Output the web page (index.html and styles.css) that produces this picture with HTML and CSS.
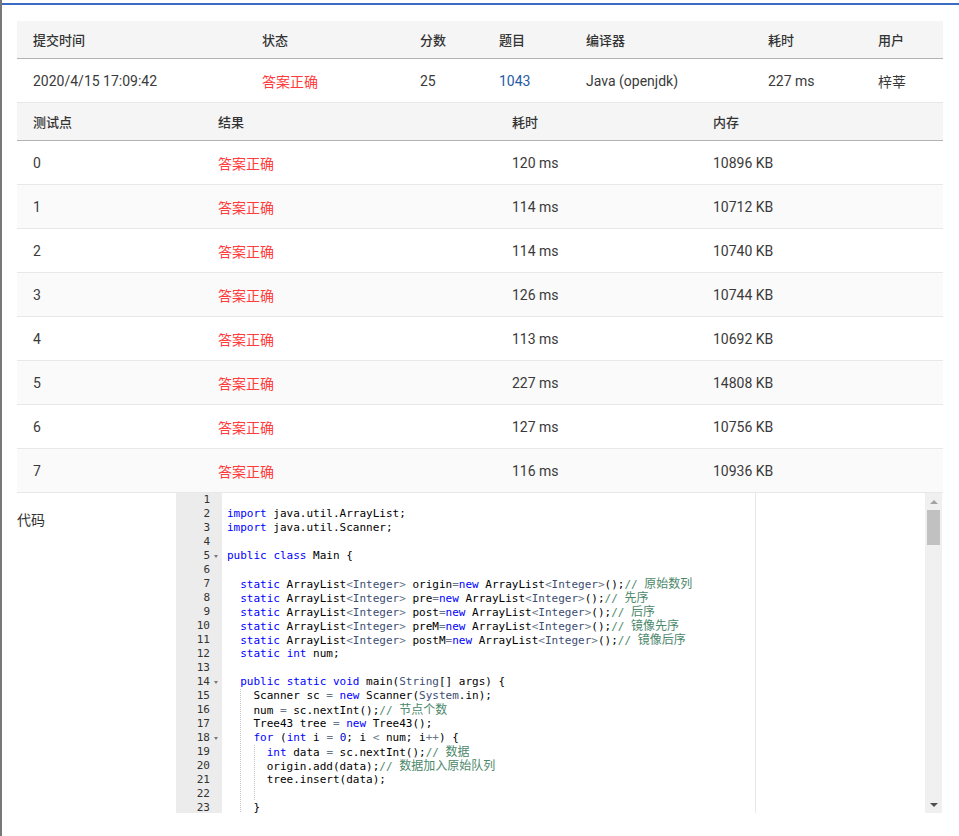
FILE: index.html
```html
<!DOCTYPE html>
<html lang="zh-CN">
<head>
<meta charset="utf-8">
<title>提交详情</title>
<link rel="stylesheet" href="styles.css">
</head>
<body>
<div class="frame">
  <div class="topbar"></div>
  <div class="content">
    <div class="row t1 head">
      <div class="cell">提交时间</div><div class="cell">状态</div><div class="cell">分数</div><div class="cell">题目</div><div class="cell">编译器</div><div class="cell">耗时</div><div class="cell">用户</div>
    </div>
    <div class="row t1 brow">
      <div class="cell">2020/4/15 17:09:42</div><div class="cell ok">答案正确</div><div class="cell">25</div><div class="cell link">1043</div><div class="cell">Java (openjdk)</div><div class="cell">227 ms</div><div class="cell">梓莘</div>
    </div>
    <div class="row t2 head">
      <div class="cell">测试点</div><div class="cell">结果</div><div class="cell">耗时</div><div class="cell">内存</div>
    </div>
    <div class="row t2 brow"><div class="cell">0</div><div class="cell ok">答案正确</div><div class="cell">120 ms</div><div class="cell">10896 KB</div></div>
    <div class="row t2 brow alt"><div class="cell">1</div><div class="cell ok">答案正确</div><div class="cell">114 ms</div><div class="cell">10712 KB</div></div>
    <div class="row t2 brow"><div class="cell">2</div><div class="cell ok">答案正确</div><div class="cell">114 ms</div><div class="cell">10740 KB</div></div>
    <div class="row t2 brow alt"><div class="cell">3</div><div class="cell ok">答案正确</div><div class="cell">126 ms</div><div class="cell">10744 KB</div></div>
    <div class="row t2 brow"><div class="cell">4</div><div class="cell ok">答案正确</div><div class="cell">113 ms</div><div class="cell">10692 KB</div></div>
    <div class="row t2 brow alt"><div class="cell">5</div><div class="cell ok">答案正确</div><div class="cell">227 ms</div><div class="cell">14808 KB</div></div>
    <div class="row t2 brow"><div class="cell">6</div><div class="cell ok">答案正确</div><div class="cell">127 ms</div><div class="cell">10756 KB</div></div>
    <div class="row t2 brow alt"><div class="cell">7</div><div class="cell ok">答案正确</div><div class="cell">116 ms</div><div class="cell">10936 KB</div></div>

    <div class="code-sec">
      <div class="label">代码</div>
      <div class="editor">
        <div class="gutter">
          <div class="gl"><span>1</span><span class="fold"></span></div>
          <div class="gl"><span>2</span><span class="fold"></span></div>
          <div class="gl"><span>3</span><span class="fold"></span></div>
          <div class="gl"><span>4</span><span class="fold"></span></div>
          <div class="gl"><span>5</span><span class="fold on"></span></div>
          <div class="gl"><span>6</span><span class="fold"></span></div>
          <div class="gl"><span>7</span><span class="fold"></span></div>
          <div class="gl"><span>8</span><span class="fold"></span></div>
          <div class="gl"><span>9</span><span class="fold"></span></div>
          <div class="gl"><span>10</span><span class="fold"></span></div>
          <div class="gl"><span>11</span><span class="fold"></span></div>
          <div class="gl"><span>12</span><span class="fold"></span></div>
          <div class="gl"><span>13</span><span class="fold"></span></div>
          <div class="gl"><span>14</span><span class="fold on"></span></div>
          <div class="gl"><span>15</span><span class="fold"></span></div>
          <div class="gl"><span>16</span><span class="fold"></span></div>
          <div class="gl"><span>17</span><span class="fold"></span></div>
          <div class="gl"><span>18</span><span class="fold on"></span></div>
          <div class="gl"><span>19</span><span class="fold"></span></div>
          <div class="gl"><span>20</span><span class="fold"></span></div>
          <div class="gl"><span>21</span><span class="fold"></span></div>
          <div class="gl"><span>22</span><span class="fold"></span></div>
          <div class="gl"><span>23</span><span class="fold"></span></div>
        </div>
        <div class="text">
          <div class="pm"></div>
<div class="ln"> </div>
<div class="ln"><span class="k">import</span> java.util.ArrayList;</div>
<div class="ln"><span class="k">import</span> java.util.Scanner;</div>
<div class="ln"> </div>
<div class="ln"><span class="k">public</span> <span class="k">class</span> Main {</div>
<div class="ln"> </div>
<div class="ln"><span class="ind">  </span><span class="k">static</span> ArrayList<span class="o">&lt;</span><span class="s">Integer</span><span class="o">&gt;</span> origin<span class="o">=</span><span class="k">new</span> ArrayList<span class="o">&lt;</span><span class="s">Integer</span><span class="o">&gt;</span>();<span class="c">// <span class="cj">原始数列</span></span></div>
<div class="ln"><span class="ind">  </span><span class="k">static</span> ArrayList<span class="o">&lt;</span><span class="s">Integer</span><span class="o">&gt;</span> pre<span class="o">=</span><span class="k">new</span> ArrayList<span class="o">&lt;</span><span class="s">Integer</span><span class="o">&gt;</span>();<span class="c">// <span class="cj">先序</span></span></div>
<div class="ln"><span class="ind">  </span><span class="k">static</span> ArrayList<span class="o">&lt;</span><span class="s">Integer</span><span class="o">&gt;</span> post<span class="o">=</span><span class="k">new</span> ArrayList<span class="o">&lt;</span><span class="s">Integer</span><span class="o">&gt;</span>();<span class="c">// <span class="cj">后序</span></span></div>
<div class="ln"><span class="ind">  </span><span class="k">static</span> ArrayList<span class="o">&lt;</span><span class="s">Integer</span><span class="o">&gt;</span> preM<span class="o">=</span><span class="k">new</span> ArrayList<span class="o">&lt;</span><span class="s">Integer</span><span class="o">&gt;</span>();<span class="c">// <span class="cj">镜像先序</span></span></div>
<div class="ln"><span class="ind">  </span><span class="k">static</span> ArrayList<span class="o">&lt;</span><span class="s">Integer</span><span class="o">&gt;</span> postM<span class="o">=</span><span class="k">new</span> ArrayList<span class="o">&lt;</span><span class="s">Integer</span><span class="o">&gt;</span>();<span class="c">// <span class="cj">镜像后序</span></span></div>
<div class="ln"><span class="ind">  </span><span class="k">static</span> <span class="k">int</span> num;</div>
<div class="ln"> </div>
<div class="ln"><span class="ind">  </span><span class="k">public</span> <span class="k">static</span> <span class="k">void</span> main(<span class="s">String</span>[] args) {</div>
<div class="ln"><span class="ind">  </span><span class="ind g">  </span>Scanner sc <span class="o">=</span> <span class="k">new</span> Scanner(<span class="s">System</span>.in);</div>
<div class="ln"><span class="ind">  </span><span class="ind g">  </span>num <span class="o">=</span> sc.nextInt();<span class="c">// <span class="cj">节点个数</span></span></div>
<div class="ln"><span class="ind">  </span><span class="ind g">  </span>Tree43 tree <span class="o">=</span> <span class="k">new</span> Tree43();</div>
<div class="ln"><span class="ind">  </span><span class="ind g">  </span><span class="k">for</span> (<span class="k">int</span> i <span class="o">=</span> <span class="n">0</span>; i <span class="o">&lt;</span> num; i<span class="o">++</span>) {</div>
<div class="ln"><span class="ind">  </span><span class="ind g">  </span><span class="ind g">  </span><span class="k">int</span> data <span class="o">=</span> sc.nextInt();<span class="c">// <span class="cj">数据</span></span></div>
<div class="ln"><span class="ind">  </span><span class="ind g">  </span><span class="ind g">  </span>origin.add(data);<span class="c">// <span class="cj">数据加入原始队列</span></span></div>
<div class="ln"><span class="ind">  </span><span class="ind g">  </span><span class="ind g">  </span>tree.insert(data);</div>
<div class="ln"><span class="ind">  </span><span class="ind g">  </span><span class="ind g">  </span></div>
<div class="ln"><span class="ind">  </span><span class="ind g">  </span>}</div>
        </div>
        <div class="scroll">
          <div class="sbtn up"></div>
          <div class="thumb"></div>
          <div class="track"></div>
          <div class="sbtn down"></div>
        </div>
      </div>
    </div>
  </div>
</div>
</body>
</html>
```

FILE: styles.css
```css
* { box-sizing: border-box; }
html, body { margin: 0; padding: 0; background: #fff; }
body {
  font-family: Roboto, "Noto Sans CJK SC", sans-serif;
  color: #333;
}
.frame {
  border-left: 2px solid #777;
  min-height: 836px;
  padding-top: 3px;
}
.topbar { height: 2px; background: #3b6bc3; }
.content { padding: 16px 16px 0 15px; }

.row { display: grid; align-items: center; }
.t1 { grid-template-columns: 229px 158px 79px 87px 182px 110px 1fr; }
.t2 { grid-template-columns: 185px 294px 201px 1fr; }
.head {
  height: 38px;
  background: #f5f5f5;
  border-bottom: 1px solid #b3b3b3;
  font-size: 13px;
  font-weight: 500;
  color: #333;
}
.brow {
  height: 44px;
  border-bottom: 1px solid #e8e8e8;
  font-size: 14px;
  color: #3a3a3a;
}
.alt { background: #fafafa; }
.cell { padding-left: 16px; white-space: nowrap; }
.ok { color: #ff3b3b; }
.link { color: #1f5aa6; }

.code-sec {
  display: grid;
  grid-template-columns: 159px 766px;
}
.label {
  padding-top: 17px;
  font-size: 14px;
  line-height: 20px;
  color: #333;
}
.editor {
  display: flex;
  height: 320px;
  overflow: hidden;
  font-family: "DejaVu Sans Mono", "Noto Sans CJK SC", monospace;
  font-size: 11px;
  line-height: 14px;
}
.gutter {
  width: 46px;
  flex: none;
  background: #ececec;
  color: #333;
}
.gl {
  display: flex;
  justify-content: flex-end;
  height: 14px;
}
.fold {
  width: 12px;
  display: flex;
  align-items: center;
  justify-content: center;
}
.fold.on::before {
  content: "";
  border-left: 2.5px solid transparent;
  border-right: 2.5px solid transparent;
  border-top: 3px solid #777;
}
.text {
  flex: 1;
  position: relative;
  padding-left: 5px;
  color: #000;
  background: #fff;
}
.ln { height: 14px; white-space: pre; }
.pm {
  position: absolute;
  left: 533px;
  top: 0;
  bottom: 0;
  width: 1px;
  background: #e8e8e8;
}
.ind { display: inline-block; height: 14px; vertical-align: top; white-space: pre; }
.ind.g {
  background: repeating-linear-gradient(to bottom, #c4c4c4 0 1px, transparent 1px 2px) left top / 1px 100% no-repeat;
}
.k { color: #0000ff; }
.s { color: #3c4c72; }
.o { color: #687687; }
.n { color: #0000cd; }
.c { color: #4c886b; }
.cj { font-size: 12px; }

.scroll {
  width: 17px;
  flex: none;
  background: #f0f0f0;
  display: flex;
  flex-direction: column;
  align-items: center;
}
.sbtn {
  height: 17px;
  width: 17px;
  display: flex;
  align-items: center;
  justify-content: center;
}
.sbtn.up::before {
  content: "";
  border-left: 4px solid transparent;
  border-right: 4px solid transparent;
  border-bottom: 4px solid #a3a3a3;
}
.sbtn.down::before {
  content: "";
  border-left: 4px solid transparent;
  border-right: 4px solid transparent;
  border-top: 4px solid #505050;
}
.thumb { width: 13px; height: 35px; background: #c1c1c1; flex: none; }
.track { flex: 1; }
```
